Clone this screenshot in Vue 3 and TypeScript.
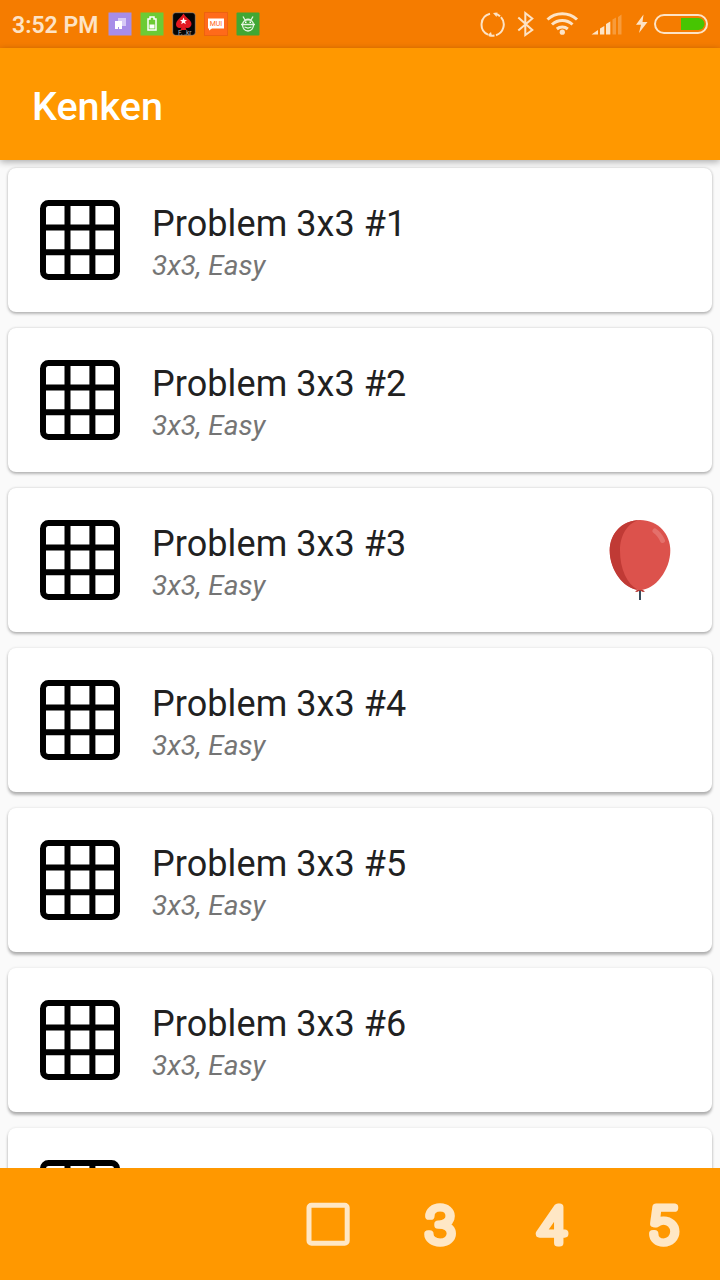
<script setup lang="ts">
interface Problem {
  id: number
  title: string
  detail: string
  solved: boolean
}

const problems: Problem[] = Array.from({ length: 7 }, (_, i) => ({
  id: i + 1,
  title: `Problem 3x3 #${i + 1}`,
  detail: '3x3, Easy',
  solved: i === 2,
}))

const sizes: number[] = [3, 4, 5]

// Shadows fall longer the further a card sits from the top of the screen.
const cardShadow = (i: number): string =>
  `0 ${(1.2 + i * 0.36).toFixed(2)}px 3px rgba(0,0,0,${(0.25 + i * 0.006).toFixed(3)}), 0 0 3px rgba(0,0,0,0.11)`
</script>

<template>
  <div class="screen">
    <header class="status">
      <span class="time">3:52 PM</span>
      <div class="notifications">
        <svg viewBox="0 0 24 24"><rect x=".5" y=".5" width="23" height="23" fill="#a78de8" /><path d="M10 6h8v8h-8z" fill="#d6caf6" /><path d="M7 9h7v8h-3v-2h-1v2H7z" fill="#fff" /></svg>
        <svg viewBox="0 0 24 24"><rect x=".5" y=".5" width="23" height="23" fill="#6ccb35" /><path d="M8 7h2V5h4v2h2v11H8z" fill="none" stroke="#fff" stroke-width="1.5" /><path d="M9.5 12.5h5v4h-5z" fill="#fff" /></svg>
        <svg viewBox="0 0 24 24"><rect x=".7" y=".7" width="22.6" height="22.6" rx="3" fill="#050505" stroke="#a49c94" stroke-width=".6" /><path d="M11.5 1.500C9 6 4 8 4 12.500c0 3 3 4.500 5.500 3l-1 2.500h6l-1-2.500c3 1.500 6-.5 6-3.500 0-4-5.500-6-8-10.500z" fill="#e31921" /><path d="m11.500 5.500 1 2.500h2.500l-2 1.700.8 2.600-2.300-1.500-2.300 1.500.8-2.600-2-1.700h2.500z" fill="#fff" /><text x="6" y="23" font-size="6.500" fill="#bbb">F.&#160;.kr</text></svg>
        <svg viewBox="0 0 24 24"><rect x=".5" y=".5" width="23" height="23" fill="#ff6a1a" stroke="#ed6210" /><path d="M4 6.500h16v10H8l-3 2v-2H4z" fill="#fff" /><text x="5.700" y="14" font-size="7" textLength="12.500" fill="#ff6518">MUI</text></svg>
        <svg viewBox="0 0 24 24"><rect x=".5" y=".5" width="23" height="23" rx="1" fill="#41a733" /><g fill="none" stroke="#e4f5df" stroke-width="1.300"><path d="m7 4.500 2 3.500c2-1 4-1 6 0l2-3.500M5 12.500h14M6.500 13c0 3 2 6 5.500 6s5.500-3 5.500-6c0-7-11-7-11 0M8.500 15l3.500 1 3.500-1" /></g><path d="M9 9.500h1.500V11H9zm4.500 0H15V11h-1.500z" fill="#fff" /></svg>
      </div>
      <svg class="indicators" viewBox="0 0 240 48">
        <g fill="none" stroke="#fde3c5" stroke-width="2">
          <path d="M10 13.700A11.200 11.200 0 0 0 8 34.700M15 13.600A11.200 11.200 0 0 1 20 16.200M21 17.200A11.200 11.200 0 0 1 16 35.200M9 35.200A11.200 11.200 0 0 0 14.500 35.600" />
          <path d="m38.300 17.500 14 12.500-7 5V13l7 5.500-14 12" />
          <path d="M67.500 19.500a21.500 21.500 0 0 1 29.500 0M72 24.500a15 15 0 0 1 20.500 0M76.800 29a8.500 8.500 0 0 1 11 0" stroke-width="3" />
          <rect x="175" y="15" width="52" height="18" rx="9" />
        </g>
        <g fill="#fde3c5">
          <path d="m13 13 4.500-.5-1 4.500zM12 36l-4.500-.7 3.500-3.300z" />
          <circle cx="82.300" cy="32.200" r="2.600" />
          <path d="m111.500 34.500 6.500-4.500v4.500zM120 28.500l4.300-2.500v8.500H120zM126 24l4.300-2.500v13H126z" />
          <path d="m132.500 19.500 3.500-2v17h-3.500zM138 17l3.500-2.500v20H138z" opacity=".3" />
          <path d="m163.500 14.500-7.500 10.300h5L159 33l8.500-11h-5z" />
        </g>
        <path d="M201 18h17.500a6 6 0 0 1 0 12H201z" fill="#47c502" />
      </svg>
    </header>

    <div class="toolbar"><h1>Kenken</h1></div>

    <main class="list">
      <article v-for="(problem, i) in problems" :key="problem.id" class="card" :style="{ boxShadow: cardShadow(i) }">
        <svg class="grid-icon" viewBox="0 0 80 80">
          <rect x="3" y="3" width="74" height="74" rx="5.500" />
          <path d="M27.500 3v74M52.400 3v74M3 27.500h74M3 52.300h74" />
        </svg>
        <div class="copy">
          <h2>{{ problem.title }}</h2>
          <p>{{ problem.detail }}</p>
        </div>
        <svg v-if="problem.solved" class="balloon" viewBox="0 0 80 80">
          <path d="M40 70v10" stroke="#394d5c" stroke-width="2" />
          <path d="m40 68-5 3.500 2 .5 3-1.500 3 1.500 2-.5z" fill="#b93631" />
          <path d="M40 0C22 0 9.700 14 9.700 30.500 9.700 50 25 70 40 70s30.300-20 30.300-39.500C70.300 14 58 0 40 0z" fill="#dc524c" />
          <path d="M40 0C22 0 9.700 14 9.700 30.500 9.700 50 23 68 38 70 27 64 20 49 20 30.500 20 15 28 2 40 0z" fill="#c03a35" />
          <path d="M55 11q4.500 3 7.500 9.500" fill="none" stroke="#e4706b" stroke-width="5" stroke-linecap="round" />
        </svg>
      </article>
    </main>

    <nav class="bottom-bar">
      <svg viewBox="0 0 112 112"><rect x="37" y="37.200" width="38.200" height="38" rx="2.500" fill="none" stroke="#ffe7c5" stroke-width="5" /></svg>
      <svg v-for="size in sizes" :key="size" viewBox="0 0 112 112">
        <text class="digit" transform="translate(56 75.2) scale(1.12 1)">{{ size }}</text>
      </svg>
    </nav>
  </div>
</template>

<style>
body {
  margin: 0;
}
</style>

<style scoped>
.screen {
  display: flex;
  flex-direction: column;
  width: 720px;
  height: 1280px;
  overflow: hidden;
  background: #fafafa;
  font-family: Roboto, "Liberation Sans", sans-serif;
}
.status {
  display: flex;
  flex: 0 0 48px;
  align-items: center;
  background: #f57c00;
}
.time {
  box-sizing: border-box;
  width: 108px;
  height: 48px;
  padding: 2px 0 0 12px;
  color: #fde3c5;
  font-size: 23px;
  font-weight: 600;
  line-height: 48px;
  white-space: nowrap;
}
.notifications {
  display: flex;
  gap: 8px;
}
.notifications svg {
  width: 24px;
  height: 24px;
}
.indicators {
  width: 240px;
  height: 48px;
  margin-left: auto;
}
.toolbar {
  display: flex;
  flex: 0 0 112px;
  align-items: center;
  padding-left: 32px;
  background: #ff9800;
  box-shadow: 0 2px 7px rgba(0, 0, 0, 0.32);
  box-sizing: border-box;
  position: relative;
  z-index: 1;
}
h1,
h2,
p {
  margin: 0;
}
h1 {
  color: #fff;
  font-size: 39.5px;
  font-weight: 500;
  line-height: 48px;
  padding-top: 5px;
}
.list {
  display: flex;
  flex: 1;
  flex-direction: column;
  gap: 16px;
  min-height: 0;
  padding: 8px;
  overflow: hidden;
}
.card {
  display: flex;
  flex: 0 0 144px;
  align-items: center;
  box-sizing: border-box;
  padding: 0 32px;
  border-radius: 8px;
  background: #fff;
}
.grid-icon {
  width: 80px;
  height: 80px;
  fill: none;
  stroke: #000;
  stroke-width: 6;
}
.copy {
  flex: 1;
  margin-left: 32px;
  padding-top: 3px;
}
h2 {
  color: #212121;
  font-size: 36px;
  font-weight: 400;
  letter-spacing: 0.08px;
  line-height: 48px;
}
p {
  color: #757575;
  font-size: 28px;
  font-style: italic;
  line-height: 35px;
}
.balloon {
  width: 80px;
  height: 80px;
}
.bottom-bar {
  display: flex;
  flex: 0 0 112px;
  justify-content: flex-end;
  background: #ff9800;
  position: relative;
}
.bottom-bar svg {
  width: 112px;
  height: 112px;
}
.digit {
  fill: #ffe7c5;
  stroke: #ffe7c5;
  stroke-width: 7.2px;
  stroke-linejoin: round;
  font-family: Inter, sans-serif;
  font-size: 49px;
  font-weight: 100;
  text-anchor: middle;
}
</style>
